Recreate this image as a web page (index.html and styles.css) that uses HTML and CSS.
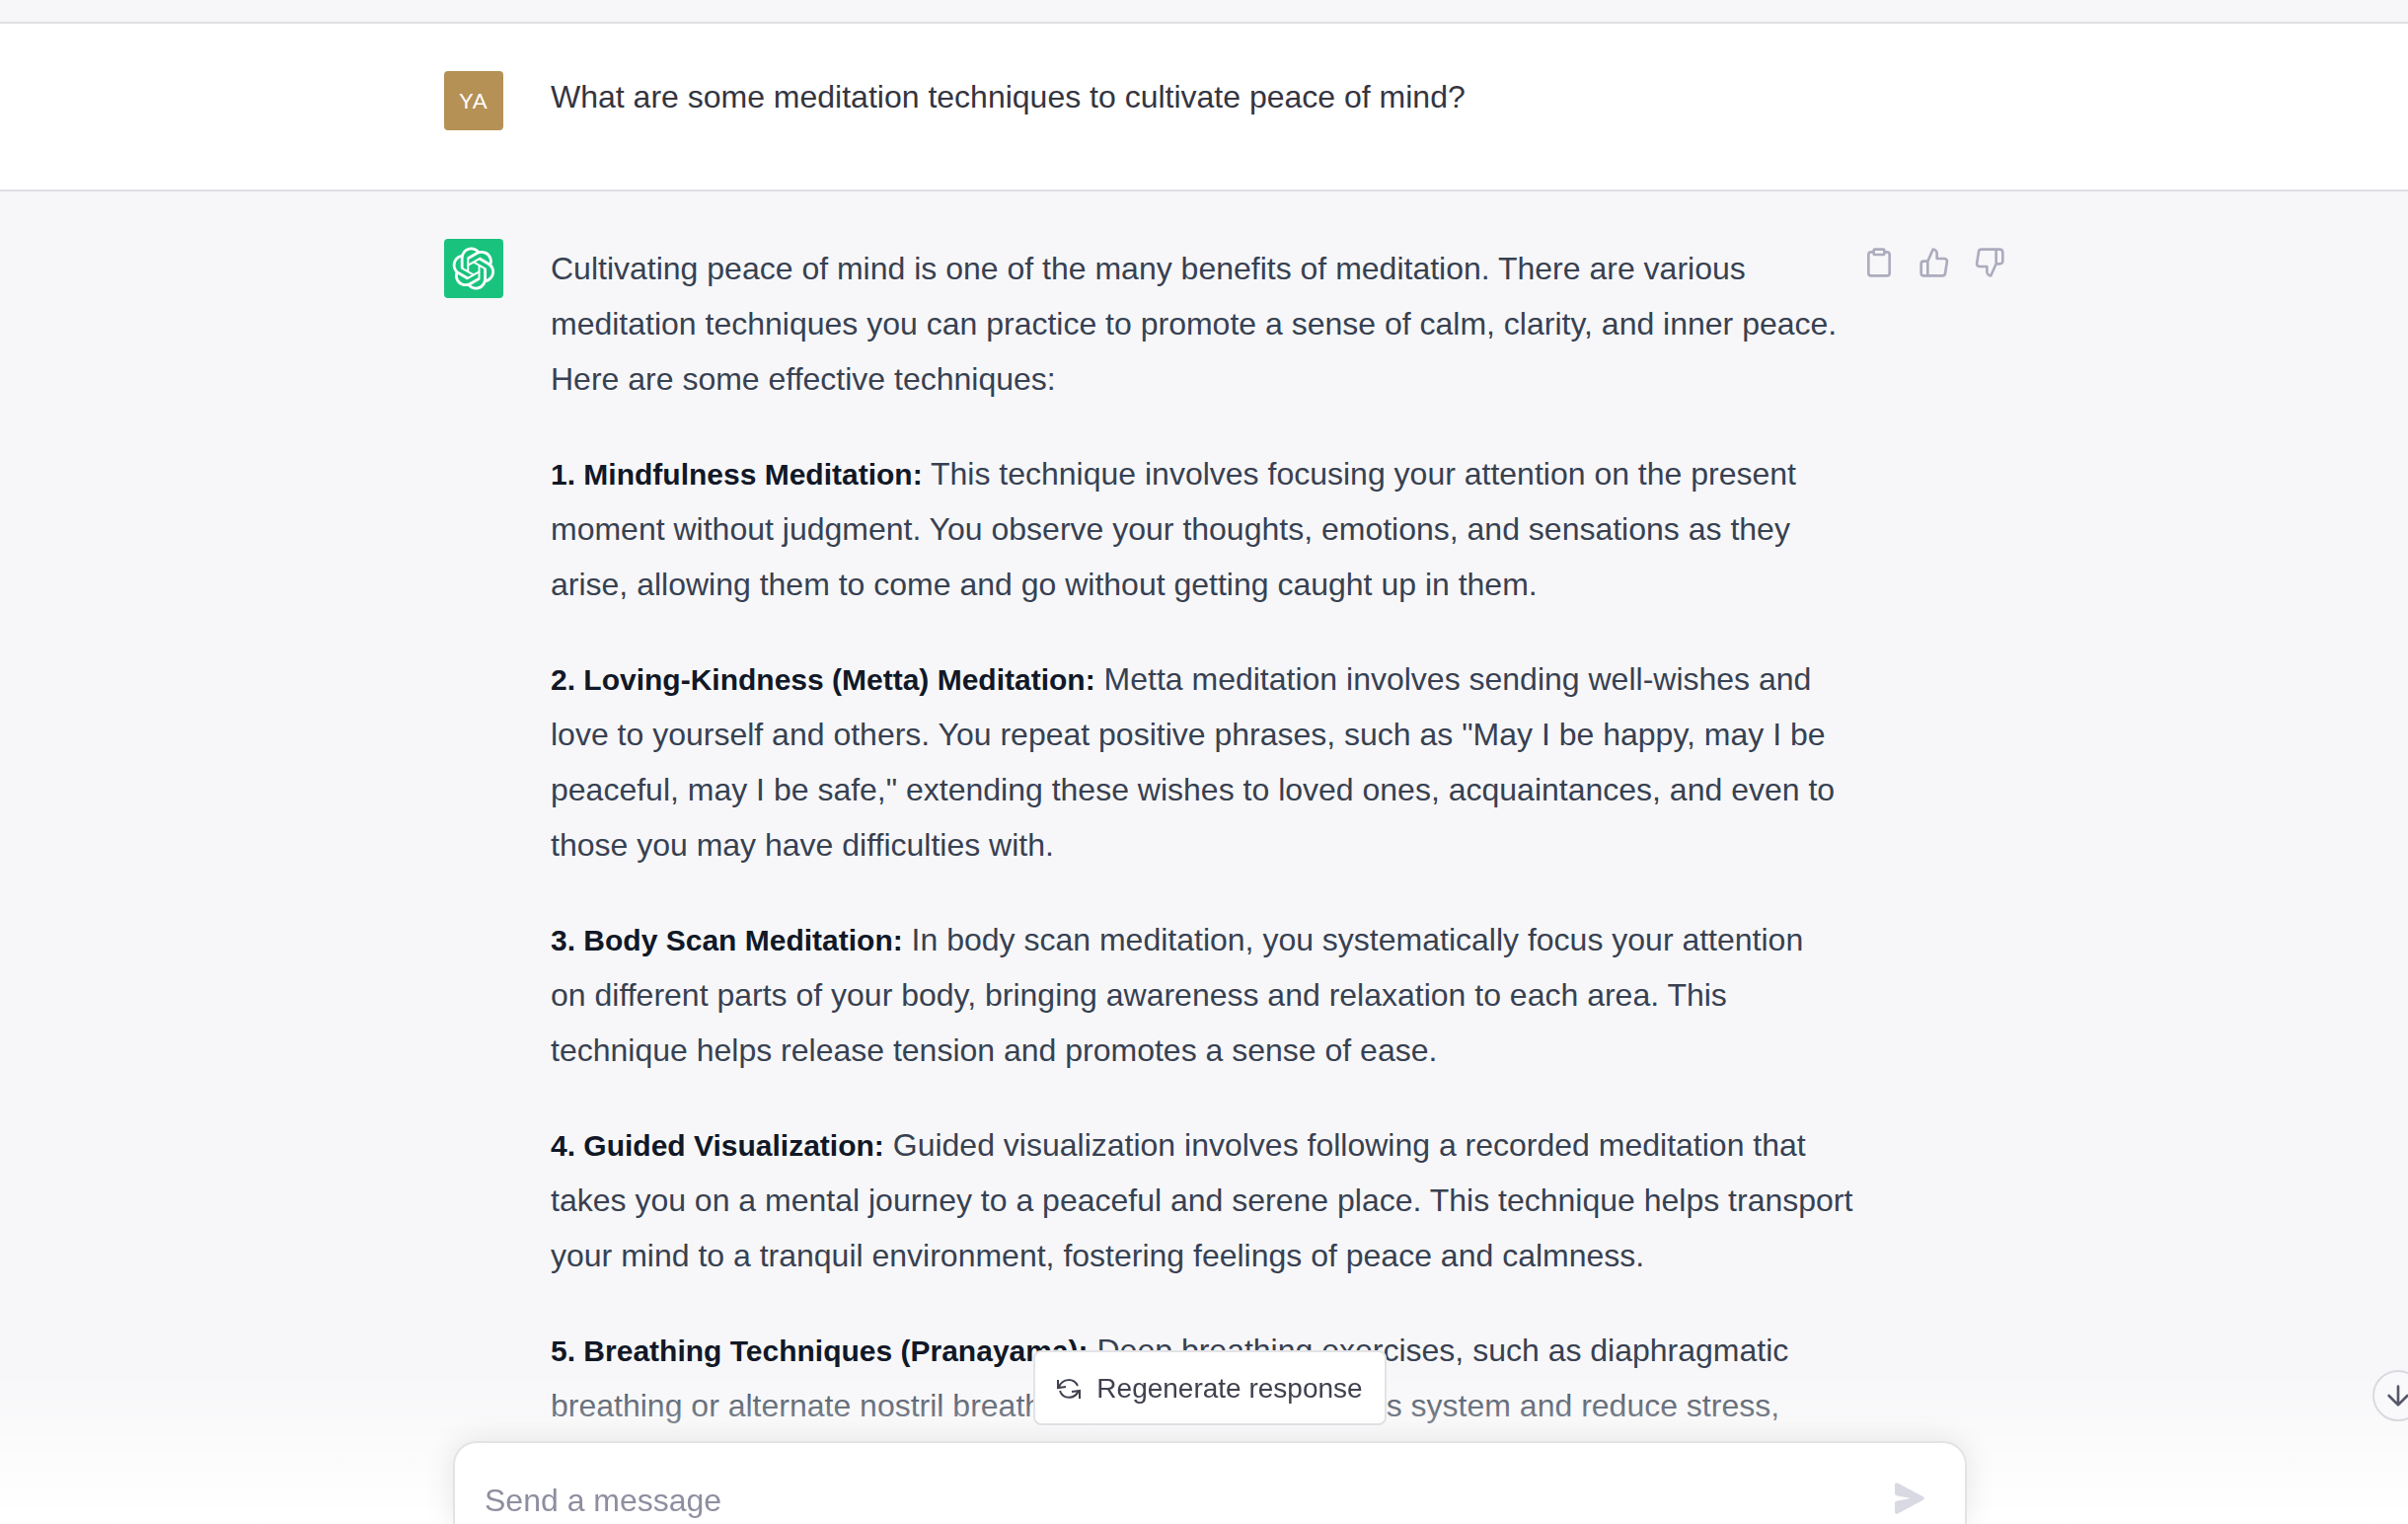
FILE: index.html
```html
<!DOCTYPE html>
<html lang="en">
<head>
    <meta charset="UTF-8">
    <meta name="viewport" content="width=device-width, initial-scale=1.0">
    <title>Meditation Techniques</title>
    <link rel="stylesheet" href="styles.css">
</head>
<body>
    <main class="chat">
        <section class="message user">
            <div class="row">
                <div class="avatar avatar-user">YA</div>
                <div class="text">What are some meditation techniques to cultivate peace of mind?</div>
            </div>
        </section>

        <section class="message assistant">
            <div class="row">
                <div class="avatar avatar-bot">
                    <svg width="44" height="44" viewBox="0 0 41 41" fill="currentColor" aria-hidden="true"><path d="M37.5324 16.8707C37.9808 15.5241 38.1363 14.0974 37.9886 12.6859C37.8409 11.2744 37.3934 9.91076 36.676 8.68622C35.6126 6.83404 33.9882 5.3676 32.0373 4.4985C30.0864 3.62941 27.9098 3.40259 25.8215 3.85078C24.8796 2.7893 23.7219 1.94125 22.4257 1.36341C21.1295 0.785575 19.7249 0.491269 18.3058 0.500197C16.1708 0.495044 14.0893 1.16803 12.3614 2.42214C10.6335 3.67624 9.34853 5.44666 8.6917 7.47815C7.30085 7.76286 5.98686 8.3414 4.8377 9.17505C3.68854 10.0087 2.73073 11.0782 2.02839 12.312C0.956464 14.1591 0.498905 16.2988 0.721698 18.4228C0.944492 20.5467 1.83612 22.5449 3.268 24.1293C2.81966 25.4759 2.66413 26.9026 2.81182 28.3141C2.95951 29.7256 3.40701 31.0892 4.12437 32.3138C5.18791 34.1659 6.8123 35.6322 8.76321 36.5013C10.7141 37.3704 12.8907 37.5973 14.9789 37.1492C15.9208 38.2107 17.0786 39.0587 18.3747 39.6366C19.6709 40.2144 21.0755 40.5087 22.4946 40.4998C24.6307 40.5054 26.7133 39.8321 28.4418 38.5772C30.1704 37.3223 31.4556 35.5506 32.1119 33.5179C33.5027 33.2332 34.8167 32.6547 35.9659 31.821C37.115 30.9874 38.0728 29.9178 38.7752 28.684C39.8458 26.8371 40.3023 24.6979 40.0789 22.5748C39.8556 20.4517 38.9639 18.4544 37.5324 16.8707ZM22.4978 37.8849C20.7443 37.8874 19.0459 37.2733 17.6994 36.1501C17.7601 36.117 17.8666 36.0586 17.936 36.0161L25.9004 31.4156C26.1003 31.3019 26.2663 31.137 26.3813 30.9378C26.4964 30.7386 26.5563 30.5124 26.5549 30.2825V19.0542L29.9213 20.998C29.9389 21.0068 29.9541 21.0198 29.9656 21.0359C29.977 21.052 29.9842 21.0707 29.9867 21.0902V30.3889C29.9842 32.375 29.1946 34.2791 27.7909 35.6841C26.3872 37.0892 24.4838 37.8806 22.4978 37.8849ZM6.39227 31.0064C5.51397 29.4888 5.19742 27.7107 5.49804 25.9832C5.55718 26.0187 5.66048 26.0818 5.73461 26.1244L13.699 30.7248C13.8975 30.8408 14.1233 30.902 14.3532 30.902C14.583 30.902 14.8088 30.8408 15.0073 30.7248L24.731 25.1103V28.9979C24.7321 29.0177 24.7283 29.0376 24.7199 29.0556C24.7115 29.0736 24.6988 29.0893 24.6829 29.1012L16.6317 33.7497C14.9096 34.7416 12.8643 35.0097 10.9447 34.4954C9.02506 33.9811 7.38785 32.7263 6.39227 31.0064ZM4.29707 13.6194C5.17156 12.0998 6.55279 10.9364 8.19885 10.3327C8.19885 10.4013 8.19491 10.5228 8.19491 10.6071V19.808C8.19351 20.0378 8.25334 20.2638 8.36823 20.4629C8.48312 20.6619 8.64893 20.8267 8.84863 20.9404L18.5723 26.5542L15.206 28.4979C15.1894 28.5089 15.1703 28.5155 15.1505 28.5173C15.1307 28.5191 15.1107 28.516 15.0924 28.5082L7.04046 23.8557C5.32135 22.8601 4.06716 21.2235 3.55289 19.3046C3.03862 17.3858 3.30624 15.3413 4.29707 13.6194ZM31.955 20.0556L22.2312 14.4411L25.5976 12.4981C25.6142 12.4872 25.6333 12.4805 25.6531 12.4787C25.6729 12.4769 25.6928 12.4801 25.7111 12.4879L33.7631 17.1364C34.9967 17.849 36.0017 18.8982 36.6606 20.1613C37.3194 21.4244 37.6047 22.849 37.4832 24.2684C37.3617 25.6878 36.8382 27.0432 35.9743 28.1759C35.1103 29.3086 33.9415 30.1717 32.6047 30.6641C32.6047 30.5947 32.6047 30.4733 32.6047 30.3889V21.188C32.6066 20.9586 32.5474 20.7328 32.4332 20.5338C32.319 20.3348 32.154 20.1698 31.955 20.0556ZM35.3055 15.0128C35.2464 14.9765 35.1431 14.9142 35.069 14.8717L27.1045 10.2712C26.906 10.1554 26.6803 10.0943 26.4504 10.0943C26.2206 10.0943 25.9948 10.1554 25.7963 10.2712L16.0726 15.8858V11.9982C16.0715 11.9783 16.0753 11.9585 16.0837 11.9405C16.0921 11.9225 16.1048 11.9068 16.1207 11.8949L24.1719 7.25025C25.4053 6.53903 26.8158 6.19376 28.2383 6.25482C29.6608 6.31589 31.0364 6.78077 32.2044 7.59508C33.3723 8.40939 34.2842 9.53945 34.8334 10.8531C35.3826 12.1667 35.5464 13.6095 35.3055 15.0128ZM14.2424 21.9419L10.8752 19.9981C10.8576 19.9893 10.8423 19.9763 10.8309 19.9602C10.8195 19.9441 10.8122 19.9254 10.8098 19.9058V10.6071C10.8107 9.18295 11.2173 7.78848 11.9819 6.58696C12.7466 5.38544 13.8377 4.42659 15.1275 3.82264C16.4173 3.21869 17.8524 2.99464 19.2649 3.1767C20.6775 3.35876 22.0089 3.93941 23.1034 4.85067C23.0427 4.88379 22.937 4.94215 22.8668 4.98473L14.9024 9.58517C14.7025 9.69878 14.5366 9.86356 14.4215 10.0626C14.3065 10.2616 14.2466 10.4877 14.2479 10.7175L14.2424 21.9419ZM16.071 17.9991L20.4018 15.4978L24.7325 17.9975V22.9985L20.4018 25.4983L16.071 22.9985V17.9991Z"/></svg>
                </div>
                <div class="text">
                    <p>Cultivating peace of mind is one of the many benefits of meditation. There are various<br>
                    meditation techniques you can practice to promote a sense of calm, clarity, and inner peace.<br>
                    Here are some effective techniques:</p>
                    <p><strong>1. Mindfulness Meditation:</strong> This technique involves focusing your attention on the present<br>
                    moment without judgment. You observe your thoughts, emotions, and sensations as they<br>
                    arise, allowing them to come and go without getting caught up in them.</p>
                    <p><strong>2. Loving-Kindness (Metta) Meditation:</strong> Metta meditation involves sending well-wishes and<br>
                    love to yourself and others. You repeat positive phrases, such as "May I be happy, may I be<br>
                    peaceful, may I be safe," extending these wishes to loved ones, acquaintances, and even to<br>
                    those you may have difficulties with.</p>
                    <p><strong>3. Body Scan Meditation:</strong> In body scan meditation, you systematically focus your attention<br>
                    on different parts of your body, bringing awareness and relaxation to each area. This<br>
                    technique helps release tension and promotes a sense of ease.</p>
                    <p><strong>4. Guided Visualization:</strong> Guided visualization involves following a recorded meditation that<br>
                    takes you on a mental journey to a peaceful and serene place. This technique helps transport<br>
                    your mind to a tranquil environment, fostering feelings of peace and calmness.</p>
                    <p><strong>5. Breathing Techniques (Pranayama):</strong> Deep breathing exercises, such as diaphragmatic<br>
                    breathing or alternate nostril breathing, can calm the nervous system and reduce stress,</p>
                </div>
                <div class="actions">
                    <button type="button" class="icon-btn" aria-label="Copy">
                        <svg class="icon" viewBox="0 0 24 24"><path d="M16 4h2a2 2 0 0 1 2 2v14a2 2 0 0 1-2 2H6a2 2 0 0 1-2-2V6a2 2 0 0 1 2-2h2"/><rect x="8" y="2" width="8" height="4" rx="1" ry="1"/></svg>
                    </button>
                    <button type="button" class="icon-btn" aria-label="Good response">
                        <svg class="icon" viewBox="0 0 24 24"><path d="M14 9V5a3 3 0 0 0-3-3l-4 9v11h11.28a2 2 0 0 0 2-1.7l1.38-9a2 2 0 0 0-2-2.3zM7 22H4a2 2 0 0 1-2-2v-7a2 2 0 0 1 2-2h3"/></svg>
                    </button>
                    <button type="button" class="icon-btn" aria-label="Bad response">
                        <svg class="icon" viewBox="0 0 24 24"><path d="M10 15v4a3 3 0 0 0 3 3l4-9V2H5.72a2 2 0 0 0-2 1.7l-1.38 9a2 2 0 0 0 2 2.3zm7-13h2.67A2.31 2.31 0 0 1 22 4v7a2.31 2.31 0 0 1-2.33 2H17"/></svg>
                    </button>
                </div>
            </div>
        </section>
    </main>

    <button type="button" class="scroll-btn" aria-label="Scroll to bottom">
        <svg class="icon" viewBox="0 0 24 24"><path d="M12 5v14M19 12l-7 7-7-7"/></svg>
    </button>

    <footer class="footer">
        <div class="footer-inner">
            <button type="button" class="regenerate">
                <svg width="24" height="20" viewBox="0 0 24 20" aria-hidden="true"><path d="M1 1v8l8-1M2 8C6-1 17-1 21 7M3 12c3 9 15 9 19 0M23 20v-8l-8 1"/></svg>
                Regenerate response
            </button>
            <form class="composer">
                <input type="text" id="prompt" name="prompt" placeholder="Send a message" aria-label="Send a message">
                <button type="button" class="send" aria-label="Send">
                    <svg width="32" height="32" viewBox="0 0 16 16" fill="currentColor"><path d="M.5 1.163A1 1 0 0 1 1.97.28l12.868 6.837a1 1 0 0 1 0 1.766L1.969 15.72A1 1 0 0 1 .5 14.836V10.33a1 1 0 0 1 .816-.983L8.5 8 1.316 6.653A1 1 0 0 1 .5 5.67V1.163Z"/></svg>
                </button>
            </form>
        </div>
    </footer>
</body>
</html>
```
FILE: styles.css
```css
* {
    box-sizing: border-box;
}

body {
    font-family: "Liberation Sans", Arial, sans-serif;
    font-size: 32px;
    margin: 0;
    background-color: #f7f7f9;
    color: #374151;
}

button {
    font-family: inherit;
    padding: 0;
    border: none;
    background: none;
    cursor: pointer;
}

.chat {
    height: 100vh;
    padding-top: 22px;
    overflow: hidden;
}

.message {
    border-top: 2px solid #dfdfe4;
    padding: 48px 0;
}

.user {
    background-color: #fff;
    color: #343541;
    line-height: 48px;
}

.assistant {
    line-height: 56px;
}

.row {
    display: flex;
    max-width: 1640px;
    min-height: 72px;
    margin: 0 auto;
    padding-left: 50px;
}

.avatar {
    flex: none;
    display: flex;
    align-items: center;
    justify-content: center;
    width: 60px;
    height: 60px;
    margin-right: 48px;
    border-radius: 4px;
    color: #fff;
}

.avatar-user {
    background-color: #b59155;
    font-family: Lato, sans-serif;
    font-size: 22px;
    letter-spacing: 1px;
}

.avatar-bot {
    background-color: #19c37d;
}

.text {
    flex: 1;
    padding-top: 2px;
    white-space: nowrap;
}

.text p {
    margin: 0 0 40px;
}

.text strong {
    color: #111827;
    font-size: 30px;
    line-height: 1;
}

.actions {
    display: flex;
    gap: 8px;
    height: 48px;
}

.icon-btn {
    width: 48px;
    height: 48px;
    padding: 8px;
    color: #acacbe;
}

.icon {
    display: block;
    width: 32px;
    height: 32px;
    fill: none;
    stroke: currentColor;
    stroke-width: 2;
    stroke-linecap: round;
    stroke-linejoin: round;
}

.scroll-btn {
    position: fixed;
    right: -16px;
    bottom: 104px;
    z-index: 2;
    width: 52px;
    height: 52px;
    padding: 8px;
    border: 2px solid #d9d9e0;
    border-radius: 50%;
    background-color: #f9f9fb;
    color: #565869;
}

.footer {
    position: fixed;
    left: 0;
    right: 0;
    bottom: 0;
    background: linear-gradient(rgba(255, 255, 255, 0) 8%, #fff 100%);
}

.footer-inner {
    display: flex;
    flex-direction: column;
    align-items: center;
    max-width: 1546px;
    margin: 0 auto;
    padding-left: 12px;
}

.regenerate {
    display: flex;
    align-items: center;
    gap: 16px;
    height: 76px;
    margin-bottom: 16px;
    padding: 2px 22px 0;
    border: 2px solid #e3e3e6;
    border-radius: 8px;
    background-color: #fff;
    color: #40414f;
    font-size: 28px;
}

.regenerate svg {
    fill: none;
    stroke: currentColor;
    stroke-width: 2;
}

.composer {
    display: flex;
    align-items: flex-start;
    width: 100%;
    height: 84px;
    padding: 34px 40px 0 30px;
    border: 2px solid #e3e3e5;
    border-bottom: none;
    border-radius: 24px 24px 0 0;
    background-color: #fff;
    box-shadow: 0 0 30px rgba(0, 0, 0, 0.1);
}

.composer input {
    flex: 1;
    height: 48px;
    padding: 0;
    border: none;
    outline: none;
    font-family: inherit;
    font-size: 32px;
}

.composer input::placeholder {
    color: #8e8ea0;
}

.send {
    margin-top: 6px;
    color: #d9d9e3;
}

.send svg {
    display: block;
}
```
